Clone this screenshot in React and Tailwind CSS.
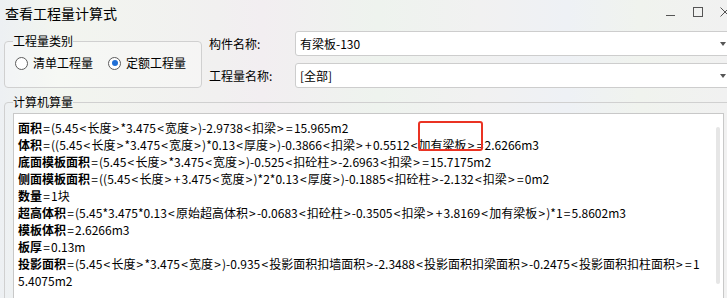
import React from "react";

const lines = [
  ["面积", "=(5.45<长度>*3.475<宽度>)-2.9738<扣梁>=15.965m2"],
  ["体积", "=((5.45<长度>*3.475<宽度>)*0.13<厚度>)-0.3866<扣梁>+0.5512<加有梁板>=2.6266m3"],
  ["底面模板面积", "=(5.45<长度>*3.475<宽度>)-0.525<扣砼柱>-2.6963<扣梁>=15.7175m2"],
  ["侧面模板面积", "=((5.45<长度>+3.475<宽度>)*2*0.13<厚度>)-0.1885<扣砼柱>-2.132<扣梁>=0m2"],
  ["数量", "=1块"],
  ["超高体积", "=(5.45*3.475*0.13<原始超高体积>-0.0683<扣砼柱>-0.3505<扣梁>+3.8169<加有梁板>)*1=5.8602m3"],
  ["模板体积", "=2.6266m3"],
  ["板厚", "=0.13m"],
  ["投影面积", "=(5.45<长度>*3.475<宽度>)-0.935<投影面积扣墙面积>-2.3488<投影面积扣梁面积>-0.2475<投影面积扣柱面积>=1"],
  ["", "5.4075m2"],
];

function Formula({ text }) {
  const parts = text.split(/([<>=+])/);
  return parts.map((p, i) =>
    /^[<>=+]$/.test(p) ? (
      <span key={i} className="inline-block w-[9px] text-center">{p}</span>
    ) : (
      <span key={i}>{p}</span>
    )
  );
}

function Radio({ checked, label }) {
  return (
    <label className="flex items-center gap-[5px]">
      <span className="w-[13px] h-[13px] rounded-full border border-[#5c5c5c] bg-white flex items-center justify-center">
        {checked && <span className="w-[6px] h-[6px] rounded-full bg-[#1f6fd6]" />}
      </span>
      <span className="text-[12px] leading-[16px]">{label}</span>
    </label>
  );
}

function Select({ value }) {
  return (
    <div className="h-[25px] w-[440px] rounded-[3px] border border-[#cdcdcd] bg-white flex items-center justify-between pl-[4px] pr-[8px]">
      <span className="text-[12px] leading-[16px]">{value}</span>
      <svg width="6" height="4" viewBox="0 0 6 4"><path d="M0 0h6L3 4z" fill="#555" /></svg>
    </div>
  );
}

export default function App() {
  return (
    <div className="relative w-[727px] h-[298px] overflow-hidden text-black font-['Noto_Sans_CJK_SC','Noto_Sans',sans-serif] bg-[linear-gradient(90deg,#edf0f3_0%,#f2f5ef_8%,#f1f0f0_30%,#f2eef1_36%,#eef3ee_52%,#f1f1f1_66%,#eef1f5_78%,#f0f3ee_88%,#f1f1f1_100%)]">
      <div className="w-[740px]">
        {/* title bar */}
        <div className="h-[31px] flex items-start">
          <div className="pl-[5px] pt-[4px] text-[14px] leading-[18px]">查看工程量计算式</div>
          <div className="ml-auto flex gap-[17px] pr-[10px] pt-[7px]">
            <svg width="10" height="10" viewBox="0 0 10 10"><path d="M0 8.5h9" stroke="#555" strokeWidth="1" /></svg>
            <svg width="10" height="10" viewBox="0 0 10 10"><rect x="0.5" y="0.5" width="9" height="9" fill="none" stroke="#555" strokeWidth="1" /></svg>
            <svg width="10" height="10" viewBox="0 0 10 10"><path d="M0.5 0.5l9 9M9.5 0.5l-9 9" stroke="#555" strokeWidth="1" /></svg>
          </div>
        </div>

        {/* top row */}
        <div className="flex items-start">
          <fieldset className="ml-[4px] mt-[2px] w-[198px] h-[55px] border border-[#d0d0d0] rounded-[4px] px-[8px] bg-white/30">
            <legend className="text-[12px] leading-[16px] px-0">工程量类别</legend>
            <div className="flex items-center gap-[15px] ml-[2px] mt-[6px]">
              <Radio label="清单工程量" />
              <Radio checked label="定额工程量" />
            </div>
          </fieldset>
          <div className="ml-[7px] grid grid-cols-[86px_440px] gap-y-[7px] items-center">
            <span className="text-[12px] leading-[16px]">构件名称:</span>
            <Select value="有梁板-130" />
            <span className="text-[12px] leading-[16px]">工程量名称:</span>
            <Select value="[全部]" />
          </div>
        </div>

        {/* calc group */}
        <fieldset className="ml-[4px] mt-[6px] w-[730px] border border-[#d0d0d0] rounded-[4px] pl-[8px] pr-[8px] pb-[8px]">
          <legend className="text-[12px] leading-[16px] px-0">计算机算量</legend>
          <div className="relative mt-[3px] w-[711px] h-[200px] border border-[#c8c8c8] bg-white pl-[4px] pt-[5px]">
            {lines.map(([label, rest], i) => (
              <div key={i} className="text-[12px] leading-[17px] whitespace-nowrap">
                {label && <span className="font-bold">{label}</span>}
                <Formula text={rest} />
              </div>
            ))}
            <div className="absolute right-[3px] top-[13px] w-[4px] h-[157px] rounded-full bg-[#e6e6e6]" />
          </div>
        </fieldset>
      </div>

      {/* annotation */}
      <div className="absolute left-[418px] top-[121px] w-[65px] h-[30px] border-2 border-[#ea3323] rounded-[3px]" />
    </div>
  );
}
